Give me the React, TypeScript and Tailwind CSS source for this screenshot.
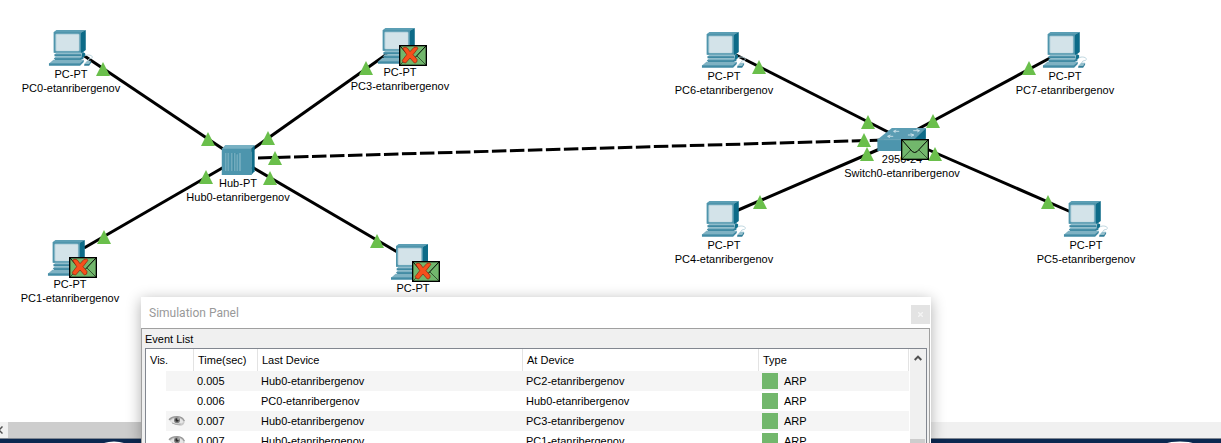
import React from "react";

type Kind = "pc" | "hub" | "switch";
type Mail = "ok" | "dropped";

interface DeviceNode {
  kind: Kind;
  x: number;
  y: number;
  model: string;
  name?: string;
  mail?: Mail;
}

const devices: DeviceNode[] = [
  { kind: "pc", x: 71, y: 30, model: "PC-PT", name: "PC0-etanribergenov" },
  { kind: "pc", x: 400, y: 28, model: "PC-PT", name: "PC3-etanribergenov", mail: "dropped" },
  { kind: "pc", x: 70, y: 240, model: "PC-PT", name: "PC1-etanribergenov", mail: "dropped" },
  { kind: "pc", x: 413, y: 244, model: "PC-PT", mail: "dropped" },
  { kind: "hub", x: 238, y: 139, model: "Hub-PT", name: "Hub0-etanribergenov" },
  { kind: "pc", x: 724, y: 32, model: "PC-PT", name: "PC6-etanribergenov" },
  { kind: "pc", x: 1065, y: 32, model: "PC-PT", name: "PC7-etanribergenov" },
  { kind: "pc", x: 724, y: 201, model: "PC-PT", name: "PC4-etanribergenov" },
  { kind: "pc", x: 1086, y: 201, model: "PC-PT", name: "PC5-etanribergenov" },
  { kind: "switch", x: 902, y: 115, model: "2950-24", name: "Switch0-etanribergenov", mail: "ok" },
];

const links = [
  [83, 55, 226, 151],
  [387, 54, 250, 151],
  [84, 248, 224, 167],
  [252, 167, 399, 253],
  [736, 55, 890, 133],
  [905, 136, 1050, 58],
  [736, 211, 882, 148],
  [922, 147, 1071, 212],
];

const lights = [
  [103, 63], [208, 133], [366, 62], [268, 132], [275, 152], [206, 171],
  [270, 172], [104, 231], [377, 235], [759, 61], [868, 116], [933, 115],
  [864, 134], [867, 148], [935, 148], [1029, 62], [760, 196], [1048, 196],
];

const events = [
  { seen: false, time: "0.005", last: "Hub0-etanribergenov", at: "PC2-etanribergenov", type: "ARP" },
  { seen: false, time: "0.006", last: "PC0-etanribergenov", at: "Hub0-etanribergenov", type: "ARP" },
  { seen: true, time: "0.007", last: "Hub0-etanribergenov", at: "PC3-etanribergenov", type: "ARP" },
  { seen: true, time: "0.007", last: "Hub0-etanribergenov", at: "PC1-etanribergenov", type: "ARP" },
];

function PcIcon() {
  return (
    <svg width="44" height="37" viewBox="0 0 132 111" aria-hidden="true">
      <path d="M15 6 23 0H111L97 8V68H15Z" fill="#5b9eb4" />
      <path d="M111 0V60L96 72V8Z" fill="#0d6b88" />
      <rect x="15" y="6" width="81" height="62" fill="#4f95ac" />
      <rect x="20" y="11" width="72" height="53" rx="4" fill="#b5d1db" />
      <rect x="23" y="14" width="67" height="48" rx="3" fill="#d3e3e9" />
      <path d="M22 68H102L96 75H17Z" fill="#8fbccb" />
      <path d="M102 66 109 70V78L98 86V75Z" fill="#12708c" />
      <path d="M17 73H97V79H17Z" fill="#3f89a2" />
      <path d="M21 79H98V86H15Z" fill="#7fb2c3" />
      <path d="M15 85H94L104 79V86L94 91H20Z" fill="#2f7f9a" />
      <path d="M14 89H105L93 101H0Z" fill="#7fb2c3" />
      <path d="M0 100H93L105 89V96L94 107H0Z" fill="#438ca5" />
      <path d="M108 78C116 72 132 76 131 82C130 88 119 83 117 92" fill="none" stroke="#b9d3dc" strokeWidth="3" />
      <path d="M115 92H127L122 101H107Z" fill="#94bfcd" />
      <path d="M107 101H121L127 92V98L121 107H106Z" fill="#347f99" />
    </svg>
  );
}

function HubIcon() {
  return (
    <svg width="34" height="37" viewBox="0 0 102 111" aria-hidden="true">
      <path d="M1 30 12 18H100L90 30Z" fill="#78b1c3" />
      <path d="M90 30 100 18V97L90 108Z" fill="#0d6b88" />
      <path d="M1 29H91V108H1Z" fill="#4d95ad" />
      <path d="M14 42V96M20 42V96M32 42V96M41 42V96M47 46V96M56 42V96" stroke="#a6cbd7" strokeWidth="2.4" />
      <path d="M17 42V96M35 42V96M44 42V96" stroke="#2c7891" strokeWidth="1.6" />
    </svg>
  );
}

function SwitchIcon() {
  return (
    <svg width="49" height="37" viewBox="0 0 147 111" aria-hidden="true">
      <path d="M0 74 44 39H146L112 74Z" fill="#5b9db3" />
      <path d="M146 39V71L110 108V74Z" fill="#0d6b88" />
      <path d="M0 73H111V108H0Z" fill="#4d95ad" />
      <path d="M0 74H110" stroke="#79afc0" strokeWidth="2" />
      <g fill="none" stroke="#dcebf0" strokeWidth="2.4">
        <path d="M50 49H66M57 45 49 49 55 53" />
        <path d="M108 47H125M118 43 127 47 120 51" />
        <path d="M32 64H48M40 60 31 64 38 68" />
        <path d="M92 60H108M100 56 110 60 102 64" />
      </g>
    </svg>
  );
}

function Envelope({ state }: { state: Mail }) {
  return (
    <svg width="28" height="21" viewBox="0 0 84 63" aria-hidden="true">
      <rect x="2" y="2" width="80" height="59" fill="#72b76c" stroke="#000" strokeWidth="4" />
      <path d="M3 3 34 38Q41 43 48 38L81 3" fill="none" stroke="#000" strokeWidth="3" />
      <path d="M3 60 29 33M81 60 54 33" stroke="#000" strokeWidth="1.6" />
      {state === "dropped" && (
        <path
          d="M11 10Q18 3 25 9L33 20 45 7Q53 3 57 10L42 29 54 43Q56 54 46 54L33 39 20 54Q10 54 10 46L23 29Z"
          fill="#f6501c"
          stroke="#8a1f0c"
          strokeWidth="2"
        />
      )}
    </svg>
  );
}

function Eye() {
  return (
    <svg width="18" height="12" viewBox="0 0 54 36" className="block" role="img" aria-label="Visible">
      <path d="M2 13Q12 3 28 4Q44 4 50 17Q50 32 36 32Q14 30 2 13Z" fill="#c9c9c9" />
      <path d="M6 17Q16 10 29 10Q42 11 47 21Q40 28 28 27Q13 26 6 17Z" fill="#e6e6e6" />
      <path d="M3 14Q13 4 29 5Q43 6 49 18" fill="none" stroke="#9a9a9a" strokeWidth="4" />
      <path d="M12 24Q24 31 38 27" fill="none" stroke="#a8a8a8" strokeWidth="3" />
      <circle cx="27" cy="16" r="9" fill="#808080" />
      <circle cx="27" cy="15" r="5" fill="#2b2b2b" />
      <circle cx="30" cy="12" r="2" fill="#fff" />
    </svg>
  );
}

function Device({ device }: { device: DeviceNode }) {
  return (
    <div
      className="absolute flex -translate-x-1/2 flex-col items-center whitespace-nowrap text-center leading-[14px]"
      style={{ left: device.x, top: device.y }}
    >
      <div className="flex h-[37px] w-[44px] justify-center">
        {device.kind === "pc" && <PcIcon />}
        {device.kind === "hub" && <HubIcon />}
        {device.kind === "switch" && (
          <div className="shrink-0">
            <SwitchIcon />
          </div>
        )}
      </div>
      <span>{device.model}</span>
      {device.name && <span>{device.name}</span>}
    </div>
  );
}

function Topology() {
  return (
    <main className="relative min-h-0 flex-1 overflow-hidden bg-white">
      <svg className="absolute inset-0 h-full w-full" aria-hidden="true">
        <g stroke="#000" strokeWidth="3">
          {links.map(([x1, y1, x2, y2]) => (
            <line key={`${x1}-${y1}`} x1={x1} y1={y1} x2={x2} y2={y2} />
          ))}
          <line x1="258" y1="158" x2="884" y2="140" strokeDasharray="14.5 3.5" />
        </g>
      </svg>
      {devices.map((d) => (
        <Device key={`${d.x}-${d.y}`} device={d} />
      ))}
      <svg className="absolute inset-0 h-full w-full" aria-hidden="true">
        {lights.map(([x, y]) => (
          <path key={`${x}-${y}`} d={`M${x} ${y - 1}L${x + 7} ${y + 13}H${x - 7}Z`} fill="#6abf4b" />
        ))}
      </svg>
      {devices.map(
        (d) =>
          d.mail && (
            <div
              key={`${d.x}-${d.y}`}
              className="absolute"
              style={{ left: d.x - 1, top: d.kind === "switch" ? d.y + 24 : d.y + 17 }}
            >
              <Envelope state={d.mail} />
            </div>
          ),
      )}
    </main>
  );
}

function SimulationPanel() {
  return (
    <section
      aria-label="Simulation Panel"
      className="absolute bottom-0 left-[141px] top-[297px] flex w-[790px] flex-col bg-white shadow-[0_3px_14px_rgba(0,0,0,0.32)]"
    >
      <header className="flex h-[31px] shrink-0 justify-between pl-2 pr-px">
        <h1 className="font-[Roboto,sans-serif] text-[12px] leading-[32px] text-[#999]">Simulation Panel</h1>
        <button
          type="button"
          aria-label="Close"
          className="mt-2 flex h-[19px] w-[19px] items-center justify-center bg-[#e3e3e3]"
        >
          <svg width="5" height="5" viewBox="0 0 5 5" aria-hidden="true">
            <path d="M0 0 5 5M5 0 0 5" stroke="#f4f4f4" strokeWidth="1.4" />
          </svg>
        </button>
      </header>
      <div className="mr-px flex min-h-0 flex-1 flex-col border-x border-t border-[#a0a0a0] bg-[#f0f0f0] pl-[3px] pr-[2px]">
        <h2 className="h-[19px] shrink-0 leading-[20px]">Event List</h2>
        <div className="flex min-h-0 flex-1 overflow-hidden border-x border-t border-[#828790] bg-white">
          <div className="min-w-0 flex-1 overflow-hidden">
            <table className="w-full table-fixed border-separate border-spacing-0 text-left">
              <colgroup>
                <col className="w-[48px]" />
                <col className="w-[64px]" />
                <col className="w-[265px]" />
                <col className="w-[236px]" />
                <col />
              </colgroup>
              <thead>
                <tr className="h-[22px]">
                  <th className="border-r border-[#e3e3e3] p-0 pl-1 font-normal">Vis.</th>
                  <th className="border-r border-[#e3e3e3] p-0 pl-1 font-normal">Time(sec)</th>
                  <th className="border-r border-[#e3e3e3] p-0 pl-1 font-normal">Last Device</th>
                  <th className="border-r border-[#e3e3e3] p-0 pl-1 font-normal">At Device</th>
                  <th className="border-r border-[#e3e3e3] p-0 pl-1 font-normal">Type</th>
                </tr>
              </thead>
              <tbody>
                {events.map((e, i) => {
                  const stripe = i % 2 === 0 ? "bg-[#f5f5f5]" : "bg-white";
                  return (
                    <tr key={i} className="h-5">
                      <td className="p-0">
                        <div className={`ml-5 flex h-5 items-center pl-[2px] ${stripe}`}>{e.seen && <Eye />}</div>
                      </td>
                      <td className={`p-0 pl-[3px] ${stripe}`}>{e.time}</td>
                      <td className={`p-0 pl-[3px] ${stripe}`}>{e.last}</td>
                      <td className={`p-0 pl-[3px] ${stripe}`}>{e.at}</td>
                      <td className={`p-0 pl-[3px] ${stripe}`}>
                        <span className="flex items-center gap-[6px]">
                          <span className="h-4 w-4 bg-[#72b76c]" />
                          {e.type}
                        </span>
                      </td>
                    </tr>
                  );
                })}
              </tbody>
            </table>
          </div>
          <div className="ml-px flex w-4 flex-col bg-[#f0f0f0]">
            <button type="button" aria-label="Scroll up" className="flex h-[18px] w-full items-center justify-center">
              <svg width="8" height="6" viewBox="0 0 8 6" aria-hidden="true">
                <path d="M0.7 5 4 1.6 7.3 5" fill="none" stroke="#505050" strokeWidth="2" />
              </svg>
            </button>
            <div className="mr-px mt-[72px] flex-1 bg-[#cdcdcd]" />
          </div>
        </div>
      </div>
    </section>
  );
}

export default function App() {
  return (
    <div className="relative flex h-screen flex-col overflow-hidden bg-white font-['Liberation_Sans',Arial,sans-serif] text-[11px] text-black">
      <Topology />
      <div className="flex h-4 shrink-0 bg-[#f0f0f0]">
        <button type="button" aria-label="Scroll left" className="flex w-2 items-center">
          <svg width="3" height="8" viewBox="0 0 3 8" aria-hidden="true">
            <path d="M2.5 0.5-1 4 2.5 7.5" fill="none" stroke="#505050" strokeWidth="1.5" />
          </svg>
        </button>
        <div className="w-3/4 max-w-[800px] bg-[#cdcdcd]" />
      </div>
      <footer className="h-[5px] shrink-0 overflow-hidden border-t border-[#7f8792] bg-[#0b2850]">
        <svg width="100%" height="4" aria-hidden="true">
          <ellipse cx="114" cy="11" rx="17" ry="8.6" fill="#fff" />
          <ellipse cx="1180" cy="11" rx="22" ry="8.6" fill="#fff" />
        </svg>
      </footer>
      <SimulationPanel />
    </div>
  );
}
